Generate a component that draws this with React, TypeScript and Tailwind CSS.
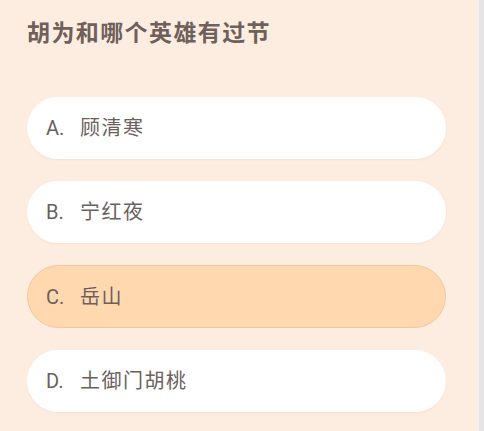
import React from "react";

const options = [
  { k: "A.", t: "顾清寒", sel: false },
  { k: "B.", t: "宁红夜", sel: false },
  { k: "C.", t: "岳山", sel: true },
  { k: "D.", t: "土御门胡桃", sel: false },
];

export default function App() {
  return (
    <div
      className="flex w-[484px] h-[431px] overflow-hidden bg-[#fdede1]"
      style={{ fontFamily: 'Roboto, "Noto Sans CJK SC", sans-serif' }}
    >
      <div className="flex-1 flex flex-col pl-[27px] pr-[30px]">
        <div className="pt-[19px] h-[97px]">
          <div className="text-[23px] leading-[30px] font-bold text-[#6e605a] tracking-[1.4px]">
            胡为和哪个英雄有过节
          </div>
        </div>
        <div className="flex flex-col gap-[22px]">
          {options.map((o) => (
            <div
              key={o.k}
              className={
                o.sel
                  ? "h-[63px] rounded-full bg-[#ffd8b0] border border-[#efc89f] flex items-center pl-[18px]"
                  : "h-[62px] rounded-full bg-white shadow-[0_1px_2px_rgba(200,160,130,0.15)] flex items-center pl-[19px]"
              }
            >
              <span className="text-[20px] text-[#6b605c] w-[34px]">{o.k}</span>
              <span className="text-[20px] text-[#6b605c] tracking-[1.5px]">{o.t}</span>
            </div>
          ))}
        </div>
      </div>
      <div className="w-[3px] bg-[#f6eeea]" />
      <div className="w-[5px] bg-[#e6e4e4]" />
    </div>
  );
}
